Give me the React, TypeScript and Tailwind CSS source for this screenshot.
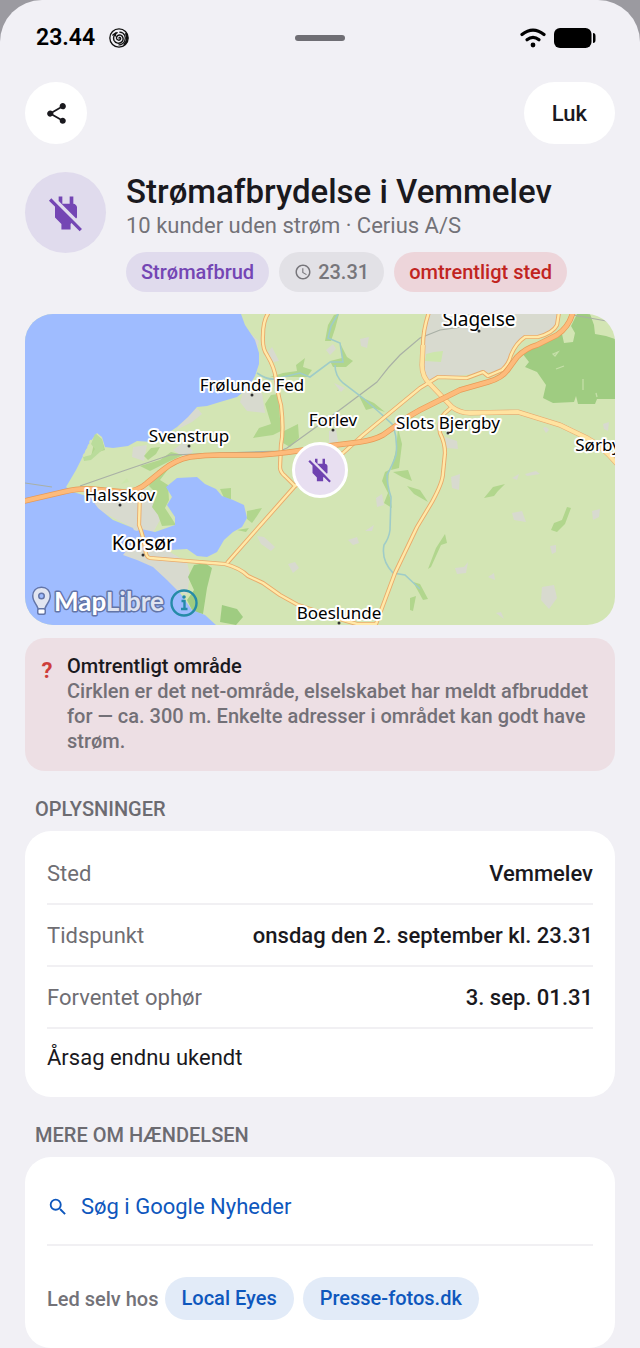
import type { ReactNode } from "react";

import {
  MdPowerOff,
  MdSchedule,
  MdSearch,
  MdShare,
} from "react-icons/md";

type Place = {
  name: string;
  x: number;
  y: number;
  size?: number;
  dot?: [number, number];
};

const places: Place[] = [
  { name: "Slagelse", x: 479, y: 326, size: 19, dot: [479, 331] },
  { name: "Frølunde Fed", x: 252, y: 391, dot: [252, 395] },
  { name: "Forlev", x: 333, y: 426, dot: [333, 430] },
  { name: "Slots Bjergby", x: 448, y: 429, dot: [448, 433] },
  { name: "Svenstrup", x: 189, y: 442, dot: [189, 446] },
  { name: "Sørby", x: 598, y: 451 },
  { name: "Halsskov", x: 120, y: 501, dot: [120, 505] },
  { name: "Korsør", x: 143, y: 550, size: 20, dot: [143, 555] },
  { name: "Boeslunde", x: 339, y: 619, dot: [339, 623] },
];

const details = [
  { label: "Sted", value: "Vemmelev" },
  { label: "Tidspunkt", value: "onsdag den 2. september kl. 23.31" },
  { label: "Forventet ophør", value: "3. sep. 01.31" },
];

const sources = ["Local Eyes", "Presse-fotos.dk"];

const motorway =
  "M20 502 L63 492 Q80 488 92 489 L125 492 Q138 491 147 483 L163 470 Q175 460 190 457 Q205 455 220 455 L260 455 Q290 453 320 447 L360 442 Q374 440 383 435 L397 425 Q408 416 420 410 L460 390 L488 382 Q503 378 509 368 L517 357 Q526 348 537 345 L557 335 Q569 327 573 312";

const roads = [
  "M269 312 Q263 320 263 335 Q262 348 267 355 Q275 368 276 380 Q278 395 281 405 Q284 430 281 445 L280 467 Q280 472 285 476 L295 486 L227 563",
  "M295 486 L343 453 L363 435 L420 388 L438 377 L467 378 L483 372 L488 376 L502 370 Q509 364 511 355 Q516 343 525 337 L538 337 Q553 333 557 325 L559 312",
  "M140 490 L139 525 Q143 535 145 548 Q146 558 150 558 L187 561 L225 564 Q240 568 248 576 L263 583 L280 595 L298 605 L343 620 L357 624 L376 624 L395 573 L417 527 L432 502 Q443 482 443 473 L445 453 Q445 443 440 433 Q438 420 445 413 L452 407",
  "M429 312 Q423 330 423 345 L422 365 Q422 377 430 384 L452 407 Q460 413 470 413 L518 412 L560 425 L587 438 Q602 446 618 465",
];

const railways =
  "M25 483 L52 487 M80 486 L123 471 L170 455 L280 451 L287 448 L337 412 L377 382 Q388 367 400 355 L420 338 L440 330 L470 326 M573 315 L612 322";

const rivers =
  "M257 373 Q267 380 275 379 L300 373 L310 377 L330 362 L343 362 L340 343 L328 338 L331 326 L338 314 M335 365 Q335 376 343 383 L363 398 L379 412 L393 425 Q398 440 396 455 Q393 464 387 475 Q387 485 391 497 L390 530 Q389 538 384 545 Q381 560 393 573 L405 575 L420 589";

const woods = [
  "M91 457 L96 434 L102 440 L105 450 L98 452 Z",
  "M144 456 L151 448 L160 447 L156 454 L148 460 Z",
  "M140 466 L160 460 L171 452 L183 455 L168 462 L150 471 Z",
  "M153 478 L158 470 L169 468 L160 480 L168 485 L169 500 L165 508 L176 525 L162 526 L158 515 L152 507 L157 494 L149 486 Z",
  "M270 377 L283 373 L297 371 L296 365 L305 358 L303 367 L312 370 L307 377 L292 377 Z",
  "M271 395 L278 394 L281 431 L273 435 L253 438 L259 428 L271 424 L265 404 Z",
  "M284 431 L298 424 L299 438 L290 447 L283 443 Z",
  "M330 361 L342 358 L341 345 L347 357 L353 361 L346 367 L333 367 Z",
  "M334 315 L339 314 L335 329 L331 341 L325 341 L328 325 Z",
  "M359 396 L374 403 L385 412 L373 408 L366 410 Z",
  "M398 428 L402 444 L399 468 L391 470 L396 450 Z",
  "M385 472 L389 470 L388 487 L392 508 L384 503 L388 493 L382 481 Z",
  "M393 472 L408 470 L412 481 L402 477 Z",
  "M407 486 L420 490 L428 502 L414 494 Z",
  "M220 489 L231 488 L231 499 L225 500 Z",
  "M247 511 L262 508 L257 516 L252 523 L247 519 Z",
  "M237 530 L249 528 L246 532 Z",
  "M484 498 L493 487 L505 484 L498 491 L494 496 Z",
  "M554 523 L562 520 L567 507 L571 508 L565 524 L557 532 L551 530 Z",
  "M428 569 L436 548 L445 534 L447 543 L441 545 L431 567 Z",
  "M413 582 L420 584 L428 599 L423 600 Z",
  "M410 598 L416 596 L413 611 L410 610 Z",
];

const villages = [
  "M133 447 L147 445 L144 461 L132 457 Z",
  "M173 450 L184 442 L193 451 L186 459 Z",
  "M188 415 L197 408 L202 414 L192 422 L176 430 Z",
  "M243 392 L262 393 L265 413 L247 411 L240 402 Z",
  "M251 334 L259 341 L257 350 L250 338 Z",
  "M272 347 L279 361 L273 362 L268 352 Z",
  "M326 350 L333 344 L336 349 L330 355 Z",
  "M360 339 L369 337 L367 348 L361 346 Z",
  "M329 431 L336 429 L338 442 L329 443 Z",
  "M334 383 L345 388 L341 392 Z",
  "M376 498 L382 494 L384 505 L377 507 Z",
  "M257 536 L264 537 L275 547 L271 551 L261 544 Z",
  "M288 564 L295 562 L299 568 L293 573 Z",
  "M348 540 L357 537 L359 543 L353 545 Z",
  "M365 531 L374 525 L372 531 Z",
  "M445 437 L457 441 L458 449 L447 448 Z",
  "M451 477 L460 474 L459 490 L452 488 Z",
  "M512 513 L522 511 L526 522 L514 520 Z",
  "M543 428 Q546 425 549 430 L546 433 Z",
  "M592 511 L600 509 L599 517 L593 520 Z",
  "M550 546 L556 545 L556 552 L552 554 Z",
  "M542 587 L554 585 L557 598 L549 609 L541 600 Z",
  "M455 568 L464 567 L468 562 L466 573 L457 574 Z",
  "M488 577 L494 573 L495 580 Z",
  "M496 613 L501 612 L504 619 Z",
  "M512 478 L519 474 L517 480 Z",
  "M525 474 L536 471 L540 474 L527 476 Z",
  "M603 424 L609 422 L608 431 L604 429 Z",
];

const StatusBar = () => (
  <div className="flex items-center justify-between pr-11 pl-9">

    <div className="flex flex-1 items-center gap-[14px]">

      <span className="text-[23px] leading-7 font-semibold text-black">
        23.44
      </span>

      <svg viewBox="0 0 24 24" className="size-5" fill="none" stroke="#111" strokeLinecap="round">
        <circle cx="12" cy="12" r="11" strokeWidth="1.6" />
        <path
          d="M12 12 C12.5 10.5 14.5 11.5 13.8 13.2 C13 15.3 9.5 15 9 12.5 C8.5 9.4 11.5 7.8 14 8.6 C17.3 9.8 17.8 14 15.8 16.3 C13 19.5 7.5 18.5 5.9 14.8 C4.5 11 6.5 7 9.8 5.6"
          strokeWidth="1.7"
        />
        <path d="M13 5 C18.5 5.2 21 11 18.8 15.5 C17.5 18.3 15 20 12 20.3" strokeWidth="1.5" />
        <path d="M4.5 8.5 L8 6 L7.8 9.5" strokeWidth="1.5" />
        <path d="M20.5 7 C22.3 11 21.8 16 18.5 19.5" strokeWidth="2.4" />
      </svg>

    </div>

    {/* margin offsets the uneven side padding so the handle stays centred */}
    <div className="ml-2 h-[6px] w-[50px] rounded-full bg-[#6f6e74]" />

    <div className="flex flex-1 items-center justify-end gap-2">

      <svg viewBox="0 0 26 20" className="h-5 w-[26px]" fill="none" stroke="#000" strokeWidth="3.2" strokeLinecap="round">
        <path d="M2 6.6 Q13 -2.4 24 6.6" />
        <path d="M7 11.8 Q13 6.8 19 11.8" />
        <circle cx="13" cy="17" r="2.4" fill="#000" stroke="none" />
      </svg>

      <svg viewBox="0 0 42 20" className="h-5 w-[42px]">
        <rect width="37.5" height="20" rx="6" />
        <path d="M39 5 Q41.5 5 41.5 8 V12 Q41.5 15 39 15 Z" />
      </svg>

    </div>

  </div>
);

const OutageMap = () => (
  <div className="relative overflow-hidden rounded-[28px]">

    <svg
      viewBox="25 314 590 311"
      className="block w-full"
      role="img"
      aria-label="Kort over Vemmelev"
    >
      <rect x="25" y="314" width="590" height="311" fill="#d3e5b4" />

      <g fill="#d8dacf">
        <path d="M429 314 L560 314 L557 327 L538 336 L525 336 L514 345 L509 362 L500 371 L438 378 L428 382 L423 370 L423 337 Z" />
        <path d="M92 496 L125 494 L145 488 L153 500 L160 520 L148 542 L170 552 L187 562 L190 575 L187 595 L165 585 L123 555 L133 528 L98 510 L88 498 Z" />
        {villages.map((d) => (
          <path key={d} d={d} />
        ))}
      </g>

      <path d="M434 352 L443 351 L441 362 L425 361 L426 354 Z M127 478 L129 482 L121 484 Z" fill="#cde6ac" />

      <g fill="#b1d68d">
        {woods.map((d) => (
          <path key={d} d={d} />
        ))}
      </g>

      <path
        d="M522 353 L537 345 L562 334 L564 343 L573 342 L575 333 L571 326 L577 314 L590 314 L594 325 L595 334 L606 336 L615 339 L615 399 L597 399 L595 404 L578 404 L576 396 L574 402 L553 403 L543 398 L546 385 L537 372 L525 367 L529 362 Z"
        fill="#9fcc81"
      />
      <path d="M553 354 L558 352 L555 356 Z M556 369 L564 366 M583 379 L583 390 M596 393 L597 397" fill="none" stroke="#c5dfa8" strokeWidth="1.3" />
      <path d="M194 565 L205 563 L212 568 L207 588 L203 614 L193 612 L187 600 L194 590 L188 577 Z" fill="#9fcc81" />
      <path d="M222 605 L237 609 L243 617 L236 625 L220 622 Z" fill="#9fcc81" />

      <g fill="#9fbcff">
        <path d="M25 314 L241 314 L245 325 L255 340 L259 353 L259 364 L255 376 L248 388 L237 397 L220 402 L207 406 L197 407 L188 417 L177 427 L165 435 L153 442 L137 441 L128 446 L113 448 L105 447 L102 437 L97 433 L90 442 L82 458 L76 470 L66 487 L73 492 L90 497 L98 508 L113 520 L133 528 L137 537 L123 555 L137 560 L153 567 L167 580 L180 593 L192 610 L205 615 L216 625 L25 625 Z" />
        <path d="M128 528 L137 531 L141 529 L155 532 L175 525 L175 517 L167 505 L172 497 L166 487 L177 478 L197 477 L205 484 L216 489 L222 496 L233 500 L244 505 L247 518 L242 527 L233 532 L224 540 L217 552 L207 557 L197 556 L187 549 L170 550 L155 546 L145 540 L133 535 Z" />
      </g>

      <path d="M95 434 L102 439 L104 449 L100 452 L91 460 L84 461 L83 457 L91 455 L95 449 L91 444 Z" fill="#badc9b" />
      <path d="M91 440 L88 448 L83 457" fill="none" stroke="#d3e5b4" strokeWidth="2" strokeDasharray="3 2" />

      <path d={railways} fill="none" stroke="#a9b0a6" strokeWidth="1.2" />
      <path d={rivers} fill="none" stroke="#9fccc8" strokeWidth="1.6" />

      <g fill="none" strokeLinejoin="round">
        {roads.map((d) => (
          <path key={d} d={d} stroke="#e9aa6b" strokeWidth="4.2" />
        ))}
        <path d="M423 345 L422 365 Q422 377 430 384 L452 407 Q460 413 470 413 L518 412 L560 425 L587 438 Q602 446 618 465" stroke="#e9b378" strokeWidth="5.2" />
        {roads.map((d) => (
          <path key={d} d={d} stroke="#ffe9a8" strokeWidth="2.4" />
        ))}
        <path d="M423 345 L422 365 Q422 377 430 384 L452 407 Q460 413 470 413 L518 412 L560 425 L587 438 Q602 446 618 465" stroke="#ffe3a0" strokeWidth="3.8" />
        <path d={motorway} stroke="#e89a56" strokeWidth="5.6" />
        <path d={motorway} stroke="#fdbb7b" strokeWidth="4.2" />
      </g>

      <g
        className="font-['Noto_Sans',sans-serif]"
        textAnchor="middle"
        stroke="#fff"
        strokeWidth="4"
        strokeLinejoin="round"
        paintOrder="stroke"
      >
        {places.map(({ name, x, y, size = 17, dot }) => (
          <g key={name}>
            <text x={x} y={y} fontSize={size}>
              {name}
            </text>
            {dot && <circle cx={dot[0]} cy={dot[1]} r="1.5" fill="#333" stroke="none" />}
          </g>
        ))}
      </g>

      <g stroke="#6375a8" strokeWidth="3" strokeLinejoin="round" paintOrder="stroke">
        <path
          d="M41.5 588 C36.5 588 33.5 591.5 33.5 596 C33.5 601 37.5 604 39 609 L44 609 C45.5 604 49.5 601 49.5 596 C49.5 591.5 46.5 588 41.5 588 Z M41.5 592.5 A3.5 3.5 0 1 1 41.5 599.5 A3.5 3.5 0 1 1 41.5 592.5 Z"
          fill="#e1e5f1"
          fillRule="evenodd"
        />
        <rect x="38.5" y="609.5" width="6" height="4" rx="1" fill="#fff" />
        <text
          x="54"
          y="611"
          fontSize="26"
          fontWeight="700"
          fill="#fff"
          className="font-['Lato',sans-serif]"
        >
          Map<tspan fill="#dfe3f0">Libre</tspan>
        </text>
      </g>
    </svg>

    <button
      aria-label="Kortoplysninger"
      className="absolute bottom-2 left-[145px] flex size-7 items-center justify-center"
    >
      <svg viewBox="0 0 28 28" className="size-7" fill="none" stroke="#258ba8">
        <circle cx="14" cy="14" r="12.5" strokeWidth="2.4" />
        <path d="M11.5 12 H14.5 V19.5 M11 20 H17.5" strokeWidth="2.4" />
        <circle cx="14" cy="8" r="1.8" fill="#258ba8" stroke="none" />
      </svg>
    </button>

    <div className="absolute inset-0 m-auto flex size-14 items-center justify-center rounded-full border-[3px] border-white bg-[#e8dff1] text-[#6f42b0]">
      <MdPowerOff size={30} />
    </div>

  </div>
);

const SectionTitle = ({ children }: { children: ReactNode }) => (
  <h2 className="mt-6 mb-2 px-[10px] text-[20px] leading-7 font-medium text-[#6c6b71]">
    {children}
  </h2>
);

export default function App() {
  return (
    <div className="min-h-screen bg-[#9b9aa0] font-['Roboto',sans-serif] text-[#1a191e]">

      <main className="min-h-screen rounded-t-[42px] bg-[#f1f0f5] pt-6">

        <StatusBar />

        <div className="px-[25px]">

          <header className="mt-[30px] flex items-center justify-between">

            <button
              aria-label="Del"
              className="flex size-[62px] items-center justify-center rounded-full bg-white"
            >
              <MdShare size={25} />
            </button>

            <button className="h-[62px] rounded-full bg-white px-7 text-[22px] font-medium">
              Luk
            </button>

          </header>

          <section className="mt-7 flex gap-5">

            <div className="flex size-[81px] shrink-0 items-center justify-center rounded-full bg-[#e0dbed] text-[#7446b4]">
              <MdPowerOff size={44} />
            </div>

            <div>

              <h1 className="text-[33px] leading-10 font-medium">
                Strømafbrydelse i Vemmelev
              </h1>

              <p className="text-[22px] leading-7 text-[#737278]">
                10 kunder uden strøm · Cerius A/S
              </p>

              <div className="mt-3 flex flex-wrap gap-[10px] text-[20px] leading-10 font-medium">

                <span className="rounded-full bg-[#e0dbed] px-[15px] text-[#7446b4]">
                  Strømafbrud
                </span>

                <span className="flex items-center gap-[6px] rounded-full bg-[#e2e1e6] px-[15px] text-[#77767b]">
                  <MdSchedule size={18} />
                  23.31
                </span>

                <span className="rounded-full bg-[#edd5da] px-[15px] text-[#c1241f]">
                  omtrentligt sted
                </span>

              </div>

            </div>

          </section>

          <section className="mt-[22px]">
            <OutageMap />
          </section>

          <section className="mt-[13px] flex gap-[13px] rounded-[20px] bg-[#eddfe4] px-[15px] pt-4 pb-[17px] text-[20px] leading-[25px] font-medium">

            <span className="w-[14px] shrink-0 pt-1 text-center text-[22px] font-bold text-[#ce3e3b]">
              ?
            </span>

            <div>

              <h2 className="text-[#1a191e]">
                Omtrentligt område
              </h2>

              <p className="text-[#737077]">
                Cirklen er det net-område, elselskabet har meldt afbruddet for — ca. 300 m. Enkelte adresser i området kan godt have strøm.
              </p>

            </div>

          </section>

          <SectionTitle>OPLYSNINGER</SectionTitle>

          <section className="rounded-[26px] bg-white px-[22px] py-3 text-[22px]">

            <dl>
              {details.map(({ label, value }) => (
                <div
                  key={label}
                  className="flex h-[62px] items-center justify-between border-b-2 border-[#f1f0f3]"
                >
                  <dt className="text-[#6f6e73]">{label}</dt>
                  <dd className="font-medium">{value}</dd>
                </div>
              ))}
            </dl>

            <p className="flex h-14 items-center">
              Årsag endnu ukendt
            </p>

          </section>

          <SectionTitle>MERE OM HÆNDELSEN</SectionTitle>

          <section className="rounded-[26px] bg-white px-[22px] pt-3 pb-7">

            <a
              href="#nyheder"
              className="flex h-[77px] items-center gap-3 border-b-2 border-[#f1f0f3] text-[22px] text-[#0e57bd]"
            >
              <MdSearch size={22} />
              Søg i Google Nyheder
            </a>

            <div className="mt-[31px] flex flex-wrap items-center text-[20px] font-medium">

              <span className="mr-[6px] text-[#737278]">
                Led selv hos
              </span>

              <div className="flex flex-wrap gap-[9px]">
                {sources.map((source) => (
                  <a
                    key={source}
                    href="#kilde"
                    className="rounded-full bg-[#e2ebf8] px-[17px] leading-[43px] text-[#0e57bd]"
                  >
                    {source}
                  </a>
                ))}
              </div>

            </div>

          </section>

        </div>

      </main>

    </div>
  );
}
